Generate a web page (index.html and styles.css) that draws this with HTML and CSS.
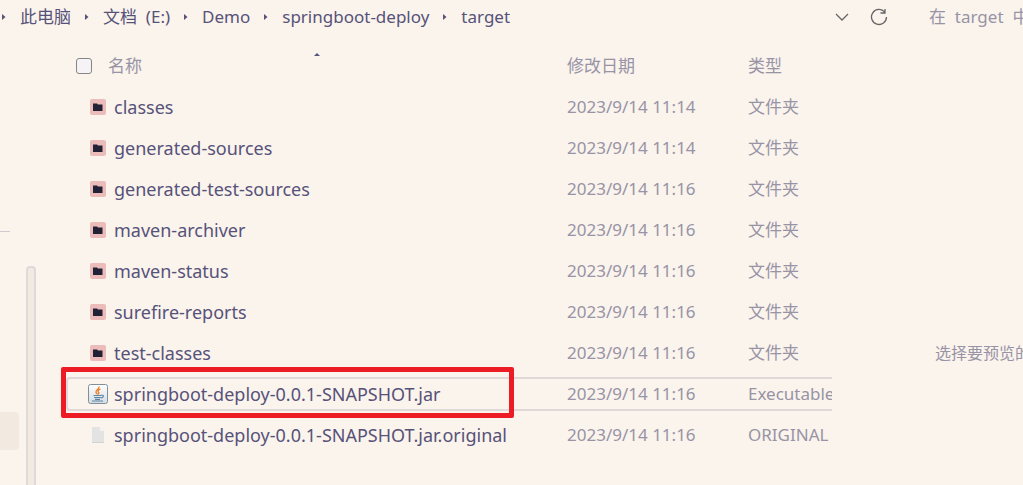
FILE: index.html
```html
<!DOCTYPE html>
<html lang="zh-CN">
<head>
<meta charset="utf-8">
<title>target</title>
<link rel="stylesheet" href="styles.css">
</head>
<body>
<svg class="defs" aria-hidden="true">
  <symbol id="folder" viewBox="0 0 16 16"><rect width="16" height="16" rx="2" fill="#ebbcba"/><path d="M3 4.500h4l1 1h4.500v6.500H3z" fill="#232136"/></symbol>
  <symbol id="caret" viewBox="0 0 4 6"><path d="M0 0 3.500 3 0 6z" fill="#575279"/></symbol>
</svg>
<div class="explorer">
  <header class="toolbar">
    <nav class="crumbs" aria-label="路径">
      <svg class="caret"><use href="#caret"/></svg>
      <a class="crumb" href="#">此电脑</a>
      <svg class="caret"><use href="#caret"/></svg>
      <a class="crumb" href="#">文档&nbsp; (E:)</a>
      <svg class="caret"><use href="#caret"/></svg>
      <a class="crumb" href="#">Demo</a>
      <svg class="caret"><use href="#caret"/></svg>
      <a class="crumb" href="#">springboot-deploy</a>
      <svg class="caret"><use href="#caret"/></svg>
      <a class="crumb" href="#">target</a>
    </nav>
    <button class="tool" aria-label="历史记录"><svg width="14" height="8" viewBox="0 0 14 8"><path d="m1 1 6 6 6-6"/></svg></button>
    <button class="tool" aria-label="刷新"><svg width="18" height="18" viewBox="0 0 18 18"><path d="M14.800 4.200A7.500 7.500 0 1 0 16.500 9M15 1v4h-4.500"/></svg></button>
    <input class="search" type="text" aria-label="搜索" placeholder="在&nbsp;&nbsp;target&nbsp;&nbsp;中搜索">
  </header>
  <div class="body">
    <aside class="sidebar">
      <div class="tree"><div class="divider"></div><div class="current"></div></div>
      <div class="scroll"></div>
    </aside>
    <main class="files">
      <table>
        <colgroup><col class="c-name"><col class="c-date"><col></colgroup>
        <thead>
          <tr><th><span class="head"><input class="check" type="checkbox" aria-label="全选">名称</span><svg class="sort" width="6" height="3" viewBox="0 0 6 3"><path d="M0 3 3 0l3 3z" fill="#575279"/></svg></th><th>修改日期</th><th>类型</th></tr>
        </thead>
        <tbody>
          <tr><td><span class="file"><svg class="icon"><use href="#folder"/></svg>classes</span></td><td>2023/9/14 11:14</td><td>文件夹</td></tr>
          <tr><td><span class="file"><svg class="icon"><use href="#folder"/></svg>generated-sources</span></td><td>2023/9/14 11:14</td><td>文件夹</td></tr>
          <tr><td><span class="file"><svg class="icon"><use href="#folder"/></svg>generated-test-sources</span></td><td>2023/9/14 11:16</td><td>文件夹</td></tr>
          <tr><td><span class="file"><svg class="icon"><use href="#folder"/></svg>maven-archiver</span></td><td>2023/9/14 11:16</td><td>文件夹</td></tr>
          <tr><td><span class="file"><svg class="icon"><use href="#folder"/></svg>maven-status</span></td><td>2023/9/14 11:16</td><td>文件夹</td></tr>
          <tr><td><span class="file"><svg class="icon"><use href="#folder"/></svg>surefire-reports</span></td><td>2023/9/14 11:16</td><td>文件夹</td></tr>
          <tr><td><span class="file"><svg class="icon"><use href="#folder"/></svg>test-classes</span></td><td>2023/9/14 11:16</td><td>文件夹</td></tr>
          <tr class="selected"><td><span class="file"><svg class="icon jar" viewBox="0 0 20 20"><defs><linearGradient id="g" x2="0" y2="1"><stop offset="0" stop-color="#fff"/><stop offset="1" stop-color="#d3dce2"/></linearGradient></defs><rect x=".5" y=".5" width="19" height="19" rx="2" fill="url(#g)" stroke="#7f8f9c"/><path d="M11 2.500C12 5 7 6 8 8.500c.3 1 1.500 1 1.500 2M12.500 5C10 6 9.500 7 10.500 8.200c.7.800.3 1.500-.3 2" fill="none" stroke="#f07c22" stroke-width="1.300"/><path d="M5.500 11.500h8M6 13.500h7M7 15.300h5M4 17h11M13.500 11c3-.3 2 3-.5 3" fill="none" stroke="#5b83a3" stroke-width="1.200"/></svg>springboot-deploy-0.0.1-SNAPSHOT.jar</span></td><td>2023/9/14 11:16</td><td>Executable Jar File</td></tr>
          <tr><td><span class="file"><svg class="icon" viewBox="0 0 16 16"><path d="M2 0h8l4 4v12H2z" fill="#e3e3e3"/><path d="M10 0v4h4z" fill="#f3f3f3"/><path d="M2 15.500h12" stroke="#d2d2d2"/></svg>springboot-deploy-0.0.1-SNAPSHOT.jar.original</span></td><td>2023/9/14 11:16</td><td>ORIGINAL 文件</td></tr>
        </tbody>
      </table>
    </main>
    <section class="preview">选择要预览的文件。</section>
  </div>
</div>
</body>
</html>
```
FILE: styles.css
```css
*, ::before, ::after { box-sizing: border-box; }
body {
  margin: 0;
  background: #faf4ed;
  color: #575279;
  font: 17px/24px "Noto Sans", "Noto Sans CJK SC", sans-serif;
}
.defs { position: absolute; width: 0; height: 0; }
.explorer { display: flex; flex-direction: column; min-height: 100vh; overflow: hidden; }
.toolbar { display: flex; align-items: center; height: 34px; }
.crumbs { display: flex; align-items: center; flex: 1; gap: 14px; padding-left: 2px; white-space: nowrap; }
.crumb { color: inherit; text-decoration: none; }
.file { font-size: 18px; }
.caret { width: 4px; height: 6px; flex: none; }
.tool { display: grid; place-items: center; width: 37px; height: 34px; padding: 0; border: 0; background: none; }
.tool path { fill: none; stroke: #666; stroke-width: 1.3; }
.search {
  width: 126px;
  padding: 0 0 0 32px;
  border: 0;
  background: none;
  color: inherit;
  font: inherit;
  outline: 0;
}
.search::placeholder { color: #9893a5; opacity: 1; }
.body { display: flex; flex: 1; }
.sidebar { display: flex; flex: none; width: 66px; }
.tree { width: 26px; padding-top: 197px; }
.divider { width: 10px; height: 1px; background: #cecacd; }
.current { width: 19px; height: 38px; margin-top: 180px; border-radius: 0 4px 4px 0; background: #f2e9e1; }
.scroll { width: 10px; margin-top: 232px; border: 2px solid #dfdad9; border-bottom: 0; border-radius: 4px 4px 0 0; background: #f2e9e1; }
.files { flex: 1; min-width: 0; padding-top: 11px; }
table { width: 100%; table-layout: fixed; border-collapse: collapse; }
.c-name { width: 501px; }
.c-date { width: 181px; }
th, td { height: 41px; padding: 0; overflow: hidden; color: #9893a5; font-weight: 400; text-align: left; white-space: nowrap; }
th { position: relative; }
th:first-child { padding-left: 10px; }
td:first-child { padding-left: 22px; color: #575279; }
.head { display: flex; align-items: center; gap: 16px; }
.check { appearance: none; width: 16px; height: 16px; margin: 0; border: 1px solid #858585; border-radius: 3px; background: #f5f3f5; }
.sort { position: absolute; top: 8px; left: 50%; margin-left: -3px; }
.file { display: flex; align-items: center; gap: 6px; }
.icon { flex: none; width: 16px; height: 16px; margin: 0 2px; }
.jar { width: 20px; height: 20px; margin: 0; }
.selected { position: relative; }
.selected td:first-child::before {
  content: "";
  position: absolute;
  inset: 4px 0 3px;
  border: 2px solid #dfdad9;
  border-right: 0;
  border-radius: 4px 0 0 4px;
}
.selected td:first-child::after {
  content: "";
  position: absolute;
  top: -6px;
  bottom: -4px;
  left: -5px;
  width: 453px;
  border: 5px solid #ed1c24;
  border-radius: 2px;
}
.preview { flex: none; width: 191px; padding: 307px 0 0 103px; overflow: hidden; color: #9893a5; font-size: 16px; white-space: nowrap; }
```
